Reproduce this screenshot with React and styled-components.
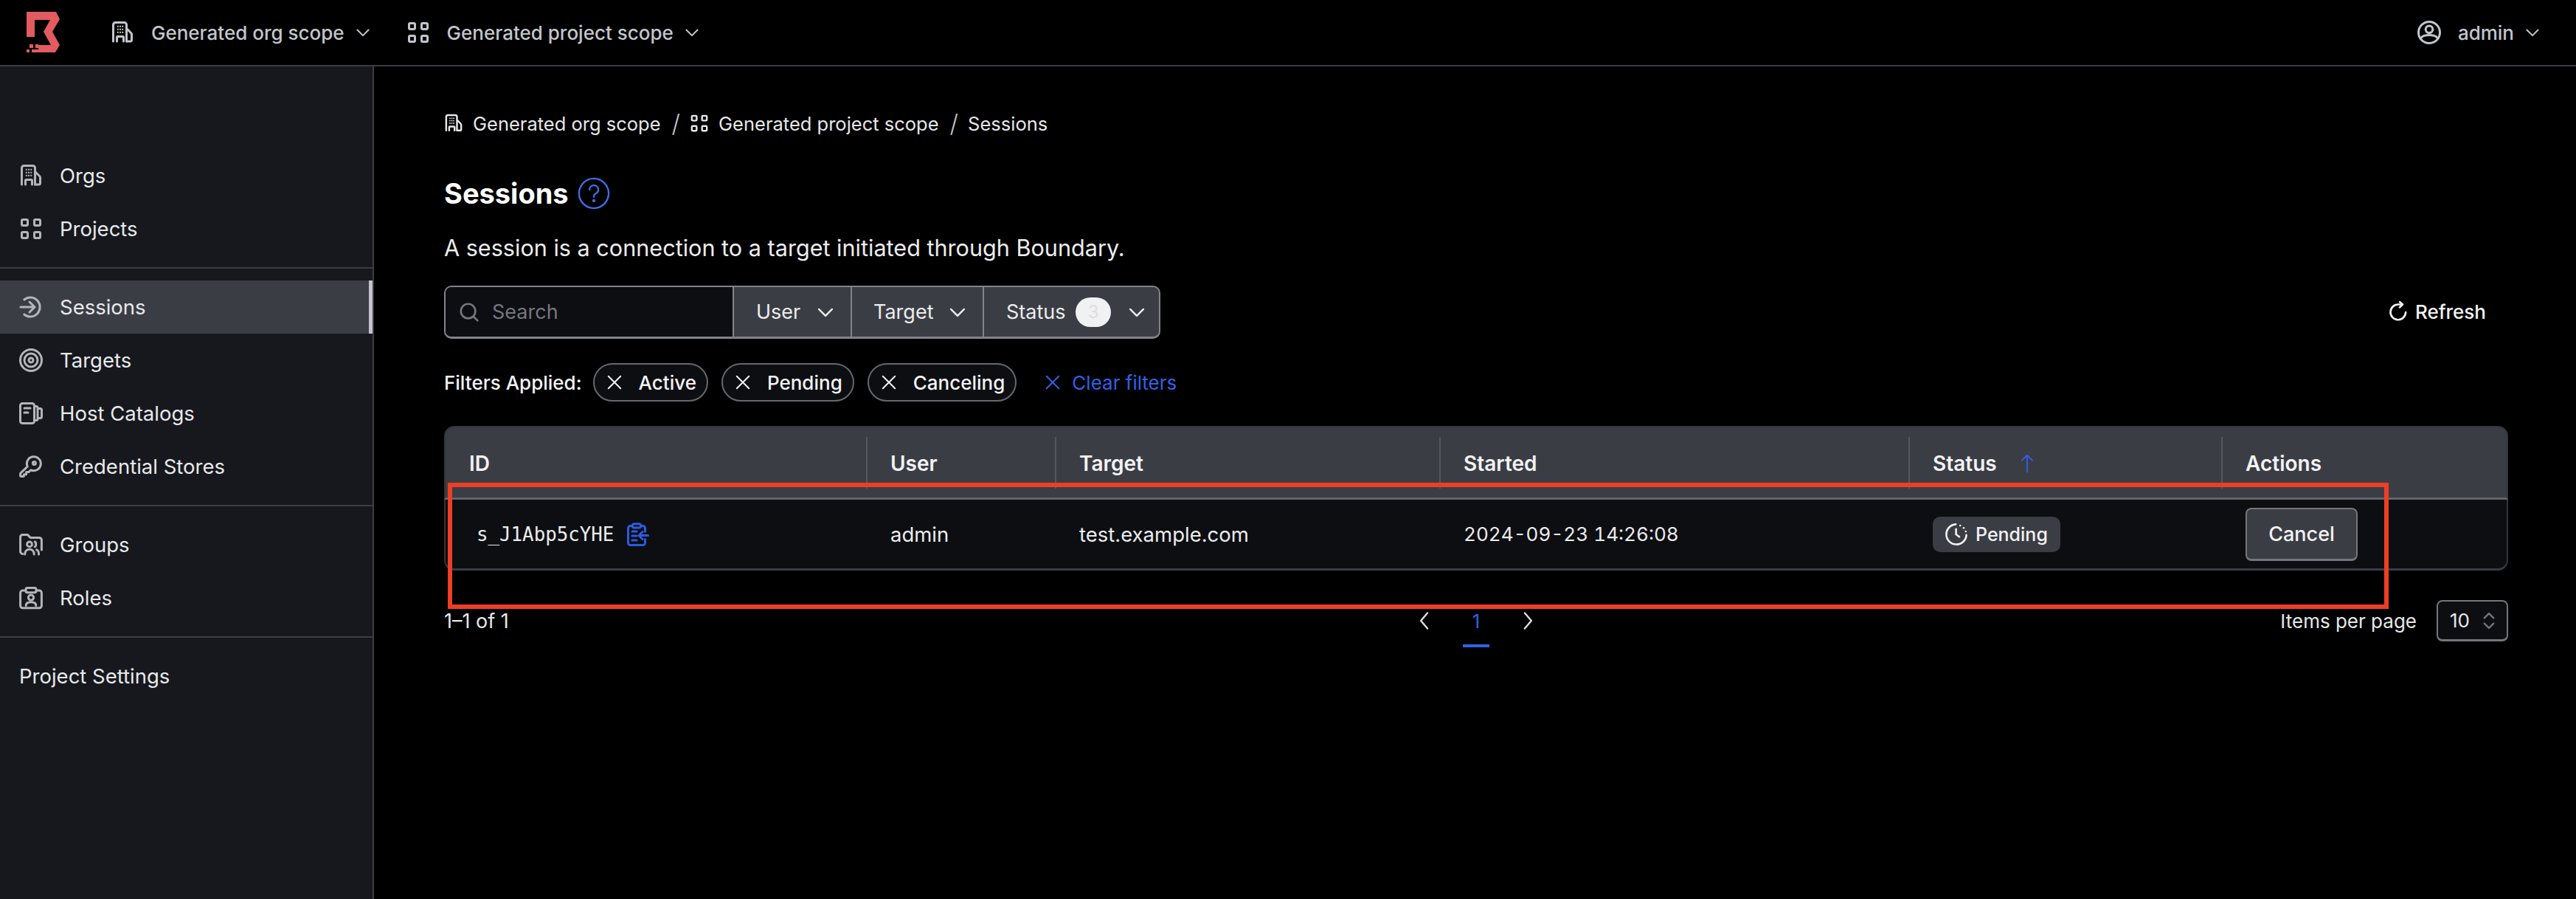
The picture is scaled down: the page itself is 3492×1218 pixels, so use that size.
import React from "react"
import styled, { createGlobalStyle, css } from "styled-components"

const GlobalStyle = createGlobalStyle`
  html, body {
    margin: 0;
    padding: 0;
    background: #000;
  }
  * {
    box-sizing: border-box;
  }
`

const Page = styled.div`
  height: 1218px;
  width: 3492px;
  overflow: hidden;
  display: flex;
  flex-direction: column;
  background: #000;
  color: #fff;
  font-family: Inter, "Noto Sans", sans-serif;
`

const Header = styled.header`
  height: 90px;
  flex: none;
  display: flex;
  align-items: center;
  padding: 0 48px 0 36px;
  border-bottom: 2px solid #3b3d45;
  color: #c2c5cc;
  font-size: 26px;
  font-weight: 500;
`

const Logo = styled.svg`
  width: 46px;
  height: 56px;
  flex: none;
  margin-right: 68px;
`

const ScopeMenu = styled.div`
  display: flex;
  align-items: center;
  margin-right: ${(p) => p.$gap || 0}px;
`

const ScopeLabel = styled.span`
  margin: 0 14px 0 23px;
`

const Spacer = styled.div`
  flex: 1;
`

const Body = styled.div`
  flex: 1;
  display: flex;
  min-height: 0;
`

const Sidebar = styled.nav`
  width: 507px;
  flex: none;
  background: #16181d;
  border-right: 2px solid #3b3d45;
  padding-top: 112px;
  font-size: 27.5px;
  color: #e8e9ec;
`

const NavGroup = styled.div`
  padding: 16px 0;
  border-bottom: ${(p) => (p.$last ? "none" : "2px solid #3b3d45")};
  &:first-child {
    padding-top: 0;
  }
`

const NavItem = styled.div`
  height: 72px;
  display: flex;
  align-items: center;
  gap: 23px;
  padding-left: 26px;
  ${(p) =>
    p.$active &&
    css`
      background: #3b3d45;
      border-right: 5px solid #c2c5cc;
    `}
  svg {
    color: #b3b5ba;
  }
`

const Main = styled.main`
  flex: 1;
  padding: 60px 92px 0 95px;
  min-width: 0;
`

const Breadcrumbs = styled.div`
  height: 34px;
  display: flex;
  align-items: center;
  font-size: 25.5px;
  color: #e6e7ea;
`

const Crumb = styled.span`
  display: flex;
  align-items: center;
  gap: 13px;
`

const Slash = styled.span`
  margin: 0 13px 0 15px;
  font-size: 33px;
  font-weight: 300;
  color: #c2c5cc;
`

const TitleRow = styled.div`
  display: flex;
  align-items: center;
  gap: 12px;
  margin-top: 53px;
  height: 50px;
`

const Title = styled.h1`
  margin: 0;
  font-size: 38px;
  font-weight: 700;
  color: #fff;
`

const Description = styled.p`
  margin: 29px 0 0;
  height: 40px;
  line-height: 40px;
  font-size: 30.6px;
  color: #eceded;
`

const Toolbar = styled.div`
  display: flex;
  align-items: center;
  justify-content: space-between;
  margin-top: 31px;
  padding-right: 30px;
`

const FilterBar = styled.div`
  display: flex;
  height: 72px;
  border: 2px solid #82848c;
  border-bottom-width: 3px;
  border-radius: 10px;
  overflow: hidden;
  background: #3b3d45;
  font-size: 27px;
`

const SearchBox = styled.div`
  width: 389px;
  display: flex;
  align-items: center;
  gap: 17px;
  padding-left: 18px;
  background: #0d0e12;
  color: #74777f;
`

const FilterButton = styled.div`
  width: ${(p) => p.$width}px;
  display: flex;
  align-items: center;
  justify-content: space-between;
  padding: 0 ${(p) => p.$right || 21}px 0 ${(p) => p.$left}px;
  border-left: 2px solid #82848c;
  color: #eceded;
`

const CountPill = styled.span`
  width: 48px;
  height: 40px;
  margin-left: -8px;
  border-radius: 20px;
  background: #f1f1f3;
  color: #dcdde0;
  font-size: 24px;
  display: flex;
  align-items: center;
  justify-content: center;
`

const RefreshButton = styled.div`
  display: flex;
  align-items: center;
  gap: 9px;
  margin-bottom: 2px;
  font-size: 26px;
  font-weight: 500;
  color: #f3f3f4;
`

const AppliedRow = styled.div`
  display: flex;
  align-items: center;
  margin-top: 33px;
  height: 52px;
  font-size: 26px;
  color: #f3f3f4;
`

const AppliedLabel = styled.span`
  margin-right: 15px;
  font-weight: 500;
`

const Pill = styled.span`
  height: 52px;
  display: flex;
  align-items: center;
  gap: 21px;
  padding: 0 14px 0 15px;
  margin-right: 18px;
  border: 2px solid #66686e;
  border-radius: 26px;
  background: #0d0e12;
  font-weight: 500;
`

const ClearFilters = styled.span`
  display: flex;
  align-items: center;
  gap: 14px;
  margin-left: 19px;
  color: #2f62e6;
`

const TableWrap = styled.div`
  position: relative;
  margin-top: 33px;
`

const columns = css`
  display: grid;
  grid-template-columns: 570px 256px 521px 636px 424px 1fr;
`

const TableHead = styled.div`
  ${columns}
  height: 100px;
  padding: 13px 0 12px;
  background: #3b3d45;
  border: 2px solid #33353c;
  border-bottom: 3px solid #62646a;
  border-radius: 14px 14px 0 0;
  font-size: 28px;
  font-weight: 600;
  color: #f3f3f4;
`

const HeadCell = styled.div`
  display: flex;
  align-items: center;
  gap: 28px;
  padding: 2px 0 0 ${(p) => (p.$first ? 32 : 31)}px;
  border-left: ${(p) => (p.$first ? "none" : "2px solid #55575e")};
`

const TableRow = styled.div`
  ${columns}
  height: 96px;
  background: #0d0e12;
  border: 2px solid #33353c;
  border-top: none;
  border-bottom: 3px solid #3b3d45;
  border-radius: 0 0 14px 14px;
  font-size: 27.5px;
  color: #eceded;
`

const Cell = styled.div`
  display: flex;
  align-items: center;
  padding-left: ${(p) => p.$left || 33}px;
`

const StartedText = styled.span`
  font-size: 26.1px;
  font-variant-numeric: tabular-nums;
`

const SessionId = styled.span`
  font-family: "DejaVu Sans Mono", "Liberation Mono", monospace;
  font-size: 25.8px;
  margin-right: 16px;
`

const StatusBadge = styled.span`
  height: 48px;
  display: flex;
  align-items: center;
  gap: 10px;
  padding: 0 17px 0 16px;
  border-radius: 10px;
  background: #3b3d45;
  font-size: 25px;
  font-weight: 500;
  color: #f3f3f4;
`

const CancelButton = styled.div`
  width: 152px;
  height: 72px;
  display: flex;
  align-items: center;
  justify-content: center;
  background: #3b3d45;
  border: 2px solid #74767d;
  border-bottom-width: 3px;
  border-radius: 8px;
  font-size: 27px;
  font-weight: 500;
  color: #f3f3f4;
`

const Highlight = styled.div`
  position: absolute;
  left: 5px;
  top: 77px;
  width: 2631px;
  height: 171px;
  border: 6px solid #ee3e26;
  pointer-events: none;
`

const Pagination = styled.div`
  display: grid;
  grid-template-columns: 1fr auto 1fr;
  align-items: center;
  margin-top: 40px;
  height: 56px;
  font-size: 26px;
  color: #e6e7ea;
`

const PageCount = styled.span`
  font-size: 27px;
`

const Pager = styled.div`
  position: relative;
  display: flex;
  align-items: center;
  gap: 39px;
`

const PageNumber = styled.span`
  position: relative;
  width: 36px;
  text-align: center;
  color: #2f62e6;
  &::after {
    content: "";
    position: absolute;
    left: 0;
    right: 0;
    bottom: -20px;
    height: 4px;
    background: #2f62e6;
  }
`

const PerPage = styled.div`
  display: flex;
  align-items: center;
  justify-content: flex-end;
  gap: 27px;
`

const PerPageSelect = styled.div`
  width: 97px;
  height: 56px;
  display: flex;
  align-items: center;
  justify-content: space-between;
  padding: 0 12px 0 16px;
  background: #0d0e12;
  border: 2px solid #74767d;
  border-bottom-width: 3px;
  border-radius: 8px;
  svg {
    color: #74777f;
  }
`

const Icon = ({ size = 32, width = 1.5, children, ...rest }) => (
  <svg
    width={size}
    height={size}
    viewBox="0 0 16 16"
    fill="none"
    stroke="currentColor"
    strokeWidth={width}
    strokeLinecap="round"
    strokeLinejoin="round"
    style={{ flex: "none" }}
    {...rest}
  >
    {children}
  </svg>
)

const OrgIcon = (props) => (
  <Icon {...props}>
    <path d="M1.75 14V2.75a1.5 1.5 0 0 1 1.5-1.5h6a1.5 1.5 0 0 1 1.5 1.5V14" />
    <path d="M4.25 14v-2.75a.5.5 0 0 1 .5-.5h3.5a.5.5 0 0 1 .5.5V14" />
    <path d="M11 5.5l2.6 2.6a1.5 1.5 0 0 1 .65 1.1V13a1 1 0 0 1-1 1H11" />
    <g stroke="none" fill="currentColor">
      <rect x="4.4" y="3.4" width="1" height="1" />
      <rect x="6" y="3.4" width="1" height="1" />
      <rect x="7.6" y="3.4" width="1" height="1" />
      <rect x="4.4" y="5.4" width="1" height="1" />
      <rect x="6" y="5.4" width="1" height="1" />
      <rect x="7.6" y="5.4" width="1" height="1" />
      <rect x="4.4" y="7.4" width="1" height="1" />
      <rect x="6" y="7.4" width="1" height="1" />
      <rect x="7.6" y="7.4" width="1" height="1" />
    </g>
  </Icon>
)

const GridIcon = (props) => (
  <Icon {...props}>
    <rect x="1.75" y="1.75" width="4" height="4" rx="0.75" />
    <rect x="10.25" y="1.75" width="4" height="4" rx="0.75" />
    <rect x="1.75" y="10.25" width="4" height="4" rx="0.75" />
    <rect x="10.25" y="10.25" width="4" height="4" rx="0.75" />
  </Icon>
)

const SessionIcon = (props) => (
  <Icon {...props}>
    <path d="M3.4 3A6.5 6.5 0 1 1 3.4 13" />
    <path d="M1 8h9.5M7 4.5 10.5 8 7 11.5" />
  </Icon>
)

const TargetIcon = (props) => (
  <Icon {...props}>
    <circle cx="8" cy="8" r="7.25" />
    <circle cx="8" cy="8" r="4.5" />
    <circle cx="8" cy="8" r="1.5" />
  </Icon>
)

const CatalogIcon = (props) => (
  <Icon {...props}>
    <rect x="0.75" y="1.25" width="9.5" height="13.5" rx="1.5" />
    <path d="M3.5 4.5h4M3.5 7.5h2.5" />
    <path d="M10.5 3.25h1a1 1 0 0 1 1 1v7.5a1 1 0 0 1-1 1h-1" />
    <path d="M12.75 4.75h1.5a1 1 0 0 1 1 1v4.5a1 1 0 0 1-1 1h-1.5" />
  </Icon>
)

const KeyIcon = (props) => (
  <Icon {...props}>
    <path d="M5.6 8.1a4.75 4.75 0 1 1 2.3 2.3L6.5 11.8H4.8v1.6H3.2v1.1a.5.5 0 0 1-.4.2H1.4a.6.6 0 0 1-.6-.6v-1.2a.7.7 0 0 1 .2-.5z" />
    <circle cx="10.2" cy="5.8" r="1" />
  </Icon>
)

const GroupIcon = (props) => (
  <Icon {...props}>
    <path d="M2.4 14.2A1.6 1.6 0 0 1 .8 12.6V2.8a1.6 1.6 0 0 1 1.6-1.6h3.2l2 2h6a1.6 1.6 0 0 1 1.6 1.6v6.7" />
    <circle cx="7" cy="7.7" r="1.7" />
    <path d="M3.9 14.5c0-2.2 1.3-3.4 3.1-3.4s3.1 1.2 3.1 3.4" />
    <path d="M10.6 6c1 .4 1 3 0 3.4M11.8 11.4c1 .4 1.5 1.6 1.5 3.1" />
  </Icon>
)

const RoleIcon = (props) => (
  <Icon {...props}>
    <path d="M4.5 3H2.4A1.6 1.6 0 0 0 .8 4.6v8.7a1.6 1.6 0 0 0 1.6 1.6h11.2a1.6 1.6 0 0 0 1.6-1.6V4.6A1.6 1.6 0 0 0 13.6 3h-2.1" />
    <rect x="4.5" y="1.2" width="7" height="3.2" rx="1" />
    <circle cx="8" cy="7.8" r="1.8" />
    <path d="M4.6 13.2c0-1.6 1.4-2.3 3.4-2.3s3.4.7 3.4 2.3" />
  </Icon>
)

const UserIcon = (props) => (
  <Icon {...props}>
    <circle cx="8" cy="8" r="7.25" />
    <circle cx="8" cy="5.9" r="2.4" />
    <path d="M2.6 11.5c1-1.2 3-1.7 5.4-1.7s4.4.5 5.4 1.7" />
  </Icon>
)

const Chevron = ({ size = 22, ...rest }) => (
  <Icon size={size} {...rest}>
    <path d="M2.5 5.5 8 11l5.5-5.5" />
  </Icon>
)

const CloseIcon = (props) => (
  <Icon size={24} width={1.3} {...props}>
    <path d="M2.5 2.5l11 11M13.5 2.5l-11 11" />
  </Icon>
)

const SearchIcon = (props) => (
  <Icon size={28} {...props}>
    <circle cx="7.2" cy="7.2" r="5.6" />
    <path d="M11.4 11.4 14.5 14.5" />
  </Icon>
)

const RefreshIcon = (props) => (
  <Icon size={28} {...props}>
    <path d="M13.8 8.6A5.9 5.9 0 1 1 8 2.6h3" />
    <path d="M9.2.6 11.4 2.6 9.2 4.8" />
  </Icon>
)

const HelpIcon = () => (
  <Icon size={44} width={0.85} color="#3d6fe8">
    <circle cx="8" cy="8" r="7.3" />
    <path d="M5.9 6.2A2.15 2.15 0 1 1 9 8.1c-.7.35-1 .8-1 1.6" />
    <circle cx="8" cy="11.6" r="0.35" fill="currentColor" />
  </Icon>
)

const CopyIcon = () => (
  <Icon color="#2a5ce0" size={32} width={1.5}>
    <path d="M4.2 2.25H3.25a1.5 1.5 0 0 0-1.5 1.5v10a1.5 1.5 0 0 0 1.5 1.5h8.5a1.5 1.5 0 0 0 1.5-1.5v-2.5M13.25 6V3.75a1.5 1.5 0 0 0-1.5-1.5h-1" />
    <rect x="4.75" y="0.9" width="5.5" height="2.6" rx="1" />
    <path d="M4.5 6h3M4.5 9h3M4.5 12h3" />
    <path d="M15.25 8.75H9M11.5 6.25 9 8.75l2.5 2.5" />
  </Icon>
)

const PendingIcon = () => (
  <Icon size={32} width={1.3} color="#f3f3f4">
    <path d="M7.6 1.2a6.8 6.8 0 1 0 7.2 7.2" />
    <path d="M7.8 4.4V8l2.2 1.6" />
    <g stroke="none" fill="currentColor">
      <circle cx="10.6" cy="2" r="0.65" />
      <circle cx="13" cy="3.6" r="0.65" />
      <circle cx="14.4" cy="6" r="0.65" />
    </g>
  </Icon>
)

const SortArrow = () => (
  <Icon size={26} width={1.1} color="#2f62e6">
    <path d="M8 15V1M3.6 5.4 8 1l4.4 4.4" />
  </Icon>
)

const SelectArrows = () => (
  <Icon size={24}>
    <path d="M3.8 5.6 8 1.4l4.2 4.2M3.8 10.4 8 14.6l4.2-4.2" />
  </Icon>
)

const PageChevron = ({ flip }) => (
  <Icon size={26} color="#dcdde0" style={{ transform: flip ? "rotate(180deg)" : "none" }}>
    <path d="M10.5 1.5 5 8l5.5 6.5" />
  </Icon>
)

const filterPills = ["Active", "Pending", "Canceling"]

const App = () => (
  <Page>
    <GlobalStyle />
    <Header>
      <Logo viewBox="36 12 46 56">
        <path
          fill="#e15b5f"
          d="M36 12H76L81 22 71 39 81 57 75 67H43V63H52V57H69L59 39 68 23H47V46H36Z"
        />
        <path fill="#e15b5f" d="M36 63h4v4h-4zM40 56h5v5h-5zM48 56h4v5h-4z" />
      </Logo>
      <ScopeMenu $gap={48}>
        <OrgIcon />
        <ScopeLabel>Generated org scope</ScopeLabel>
        <Chevron />
      </ScopeMenu>
      <ScopeMenu>
        <GridIcon />
        <ScopeLabel>Generated project scope</ScopeLabel>
        <Chevron />
      </ScopeMenu>
      <Spacer />
      <ScopeMenu>
        <UserIcon />
        <ScopeLabel>admin</ScopeLabel>
        <Chevron />
      </ScopeMenu>
    </Header>
    <Body>
      <Sidebar>
        <NavGroup>
          <NavItem><OrgIcon />Orgs</NavItem>
          <NavItem><GridIcon />Projects</NavItem>
        </NavGroup>
        <NavGroup>
          <NavItem $active><SessionIcon />Sessions</NavItem>
          <NavItem><TargetIcon />Targets</NavItem>
          <NavItem><CatalogIcon />Host Catalogs</NavItem>
          <NavItem><KeyIcon />Credential Stores</NavItem>
        </NavGroup>
        <NavGroup>
          <NavItem><GroupIcon />Groups</NavItem>
          <NavItem><RoleIcon />Roles</NavItem>
        </NavGroup>
        <NavGroup $last>
          <NavItem>Project Settings</NavItem>
        </NavGroup>
      </Sidebar>
      <Main>
        <Breadcrumbs>
          <Crumb><OrgIcon size={26} />Generated org scope</Crumb>
          <Slash>/</Slash>
          <Crumb><GridIcon size={26} />Generated project scope</Crumb>
          <Slash>/</Slash>
          <Crumb>Sessions</Crumb>
        </Breadcrumbs>
        <TitleRow>
          <Title>Sessions</Title>
          <HelpIcon />
        </TitleRow>
        <Description>A session is a connection to a target initiated through Boundary.</Description>
        <Toolbar>
          <FilterBar>
            <SearchBox>
              <SearchIcon />
              Search
            </SearchBox>
            <FilterButton $width={160} $left={30}>User<Chevron size={26} /></FilterButton>
            <FilterButton $width={179} $left={29}>Target<Chevron size={26} /></FilterButton>
            <FilterButton $width={239} $left={30} $right={17}>
              Status
              <CountPill>3</CountPill>
              <Chevron size={26} />
            </FilterButton>
          </FilterBar>
          <RefreshButton>
            <RefreshIcon />
            Refresh
          </RefreshButton>
        </Toolbar>
        <AppliedRow>
          <AppliedLabel>Filters Applied:</AppliedLabel>
          {filterPills.map((name) => (
            <Pill key={name}>
              <CloseIcon />
              {name}
            </Pill>
          ))}
          <ClearFilters>
            <CloseIcon />
            Clear filters
          </ClearFilters>
        </AppliedRow>
        <TableWrap>
          <TableHead>
            <HeadCell $first>ID</HeadCell>
            <HeadCell>User</HeadCell>
            <HeadCell>Target</HeadCell>
            <HeadCell>Started</HeadCell>
            <HeadCell>Status<SortArrow /></HeadCell>
            <HeadCell>Actions</HeadCell>
          </TableHead>
          <TableRow>
            <Cell $left={42}>
              <SessionId>s_J1Abp5cYHE</SessionId>
              <CopyIcon />
            </Cell>
            <Cell>admin</Cell>
            <Cell>test.example.com</Cell>
            <Cell>
              <StartedText>2024-09-23 14:26:08</StartedText>
            </Cell>
            <Cell>
              <StatusBadge>
                <PendingIcon />
                Pending
              </StatusBadge>
            </Cell>
            <Cell>
              <CancelButton>Cancel</CancelButton>
            </Cell>
          </TableRow>
          <Highlight />
        </TableWrap>
        <Pagination>
          <PageCount>1–1 of 1</PageCount>
          <Pager>
            <PageChevron />
            <PageNumber>1</PageNumber>
            <PageChevron flip />
          </Pager>
          <PerPage>
            Items per page
            <PerPageSelect>
              10
              <SelectArrows />
            </PerPageSelect>
          </PerPage>
        </Pagination>
      </Main>
    </Body>
  </Page>
)

export default App
